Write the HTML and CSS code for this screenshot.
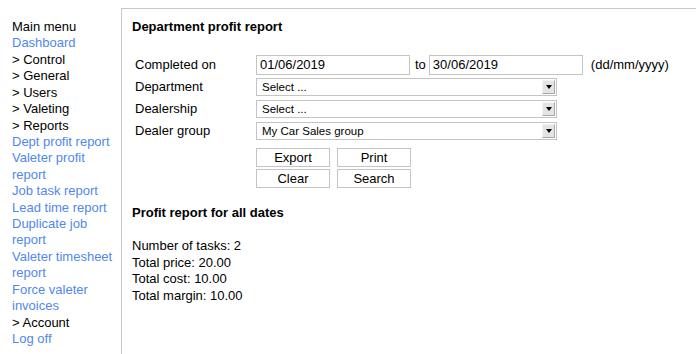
FILE: index.html
```html
<!DOCTYPE html>
<html>
<head>
<meta charset="utf-8">
<link rel="stylesheet" href="styles.css">
</head>
<body>
<div class="page">
  <nav class="sidebar">
    <div class="item">Main menu</div>
    <a class="link" href="#">Dashboard</a>
    <div class="item">&gt; Control</div>
    <div class="item">&gt; General</div>
    <div class="item">&gt; Users</div>
    <div class="item">&gt; Valeting</div>
    <div class="item">&gt; Reports</div>
    <a class="link" href="#">Dept profit report</a>
    <a class="link" href="#">Valeter profit report</a>
    <a class="link" href="#">Job task report</a>
    <a class="link" href="#">Lead time report</a>
    <a class="link" href="#">Duplicate job report</a>
    <a class="link" href="#">Valeter timesheet report</a>
    <a class="link" href="#">Force valeter invoices</a>
    <div class="item">&gt; Account</div>
    <a class="link" href="#">Log off</a>
  </nav>
  <main class="panel">
    <h1 class="title">Department profit report</h1>
    <div class="form">
      <div class="label">Completed on</div>
      <div class="field">
        <div class="input">01/06/2019</div>
        <span class="to">to</span>
        <div class="input">30/06/2019</div>
        <span class="hint">(dd/mm/yyyy)</span>
      </div>
      <div class="label">Department</div>
      <div class="field">
        <div class="select"><span class="sel-text">Select ...</span><span class="arrow"></span></div>
      </div>
      <div class="label">Dealership</div>
      <div class="field">
        <div class="select"><span class="sel-text">Select ...</span><span class="arrow"></span></div>
      </div>
      <div class="label">Dealer group</div>
      <div class="field">
        <div class="select"><span class="sel-text">My Car Sales group</span><span class="arrow"></span></div>
      </div>
      <div class="label"></div>
      <div class="field buttons first">
        <button class="btn">Export</button>
        <button class="btn">Print</button>
      </div>
      <div class="label"></div>
      <div class="field buttons">
        <button class="btn">Clear</button>
        <button class="btn">Search</button>
      </div>
    </div>
    <h2 class="subtitle">Profit report for all dates</h2>
    <div class="stats">
      <div>Number of tasks: 2</div>
      <div>Total price: 20.00</div>
      <div>Total cost: 10.00</div>
      <div>Total margin: 10.00</div>
    </div>
  </main>
</div>
</body>
</html>
```
FILE: styles.css
```css
html, body {
  margin: 0;
  padding: 0;
  background: #fff;
}
body {
  font-family: "Liberation Sans", Arial, Helvetica, sans-serif;
  font-size: 13px;
  color: #000;
  width: 696px;
  height: 354px;
  overflow: hidden;
}
.page {
  display: flex;
  align-items: flex-start;
  height: 354px;
}
.sidebar {
  width: 121px;
  flex: 0 0 121px;
  padding: 19px 0 0 12px;
  box-sizing: border-box;
  display: flex;
  flex-direction: column;
  line-height: 16.42px;
}
.sidebar .item {
  color: #000;
}
.sidebar .link {
  color: #5088ee;
  text-decoration: none;
}
.panel {
  flex: 1;
  margin-top: 8px;
  height: 360px;
  border-top: 1px solid #c8c8c8;
  border-left: 1px solid #c8c8c8;
  padding: 10px 0 0 10px;
  box-sizing: border-box;
}
.title, .subtitle {
  margin: 0;
  font-size: 13px;
  font-weight: bold;
  line-height: 16px;
}
.form {
  margin: 18px 0 0 3px;
  display: grid;
  grid-template-columns: 121px auto;
  grid-template-rows: 23px 22px 22px 22px 25px 22px;
  align-items: center;
}
.label {
  line-height: 16px;
}
.field {
  display: flex;
  align-items: center;
}
.input {
  width: 154px;
  height: 20px;
  box-sizing: border-box;
  border: 1px solid #c4c4c4;
  padding: 0 3px;
  line-height: 18px;
  font-size: 13px;
}
.to {
  margin: 0 3px 0 5px;
}
.hint {
  margin-left: 8px;
}
.select {
  width: 301px;
  height: 18px;
  box-sizing: border-box;
  border: 1px solid #c4c4c4;
  display: flex;
  align-items: center;
  justify-content: space-between;
  padding: 0 1px 0 5px;
}
.sel-text {
  font-size: 11.5px;
  line-height: 14px;
}
.arrow {
  width: 13px;
  height: 14px;
  box-sizing: border-box;
  background: #e4e4e4;
  border-top: 1px solid #f4f4f4;
  border-left: 1px solid #f4f4f4;
  border-right: 1px solid #a8a8a8;
  border-bottom: 1px solid #a8a8a8;
  display: flex;
  align-items: center;
  justify-content: center;
}
.arrow::after {
  content: "";
  width: 0;
  height: 0;
  border-left: 3px solid transparent;
  border-right: 3px solid transparent;
  border-top: 4px solid #000;
}
.buttons {
  gap: 7px;
}
.buttons.first {
  align-self: end;
}
.btn {
  width: 74px;
  height: 19px;
  box-sizing: border-box;
  border: 1px solid #c4c4c4;
  background: #fff;
  font-family: "Liberation Sans", Arial, Helvetica, sans-serif;
  font-size: 13px;
  color: #000;
  padding: 0;
  line-height: 17px;
}
.subtitle {
  margin-top: 16px;
}
.stats {
  margin-top: 17px;
  line-height: 16.6px;
}
```
